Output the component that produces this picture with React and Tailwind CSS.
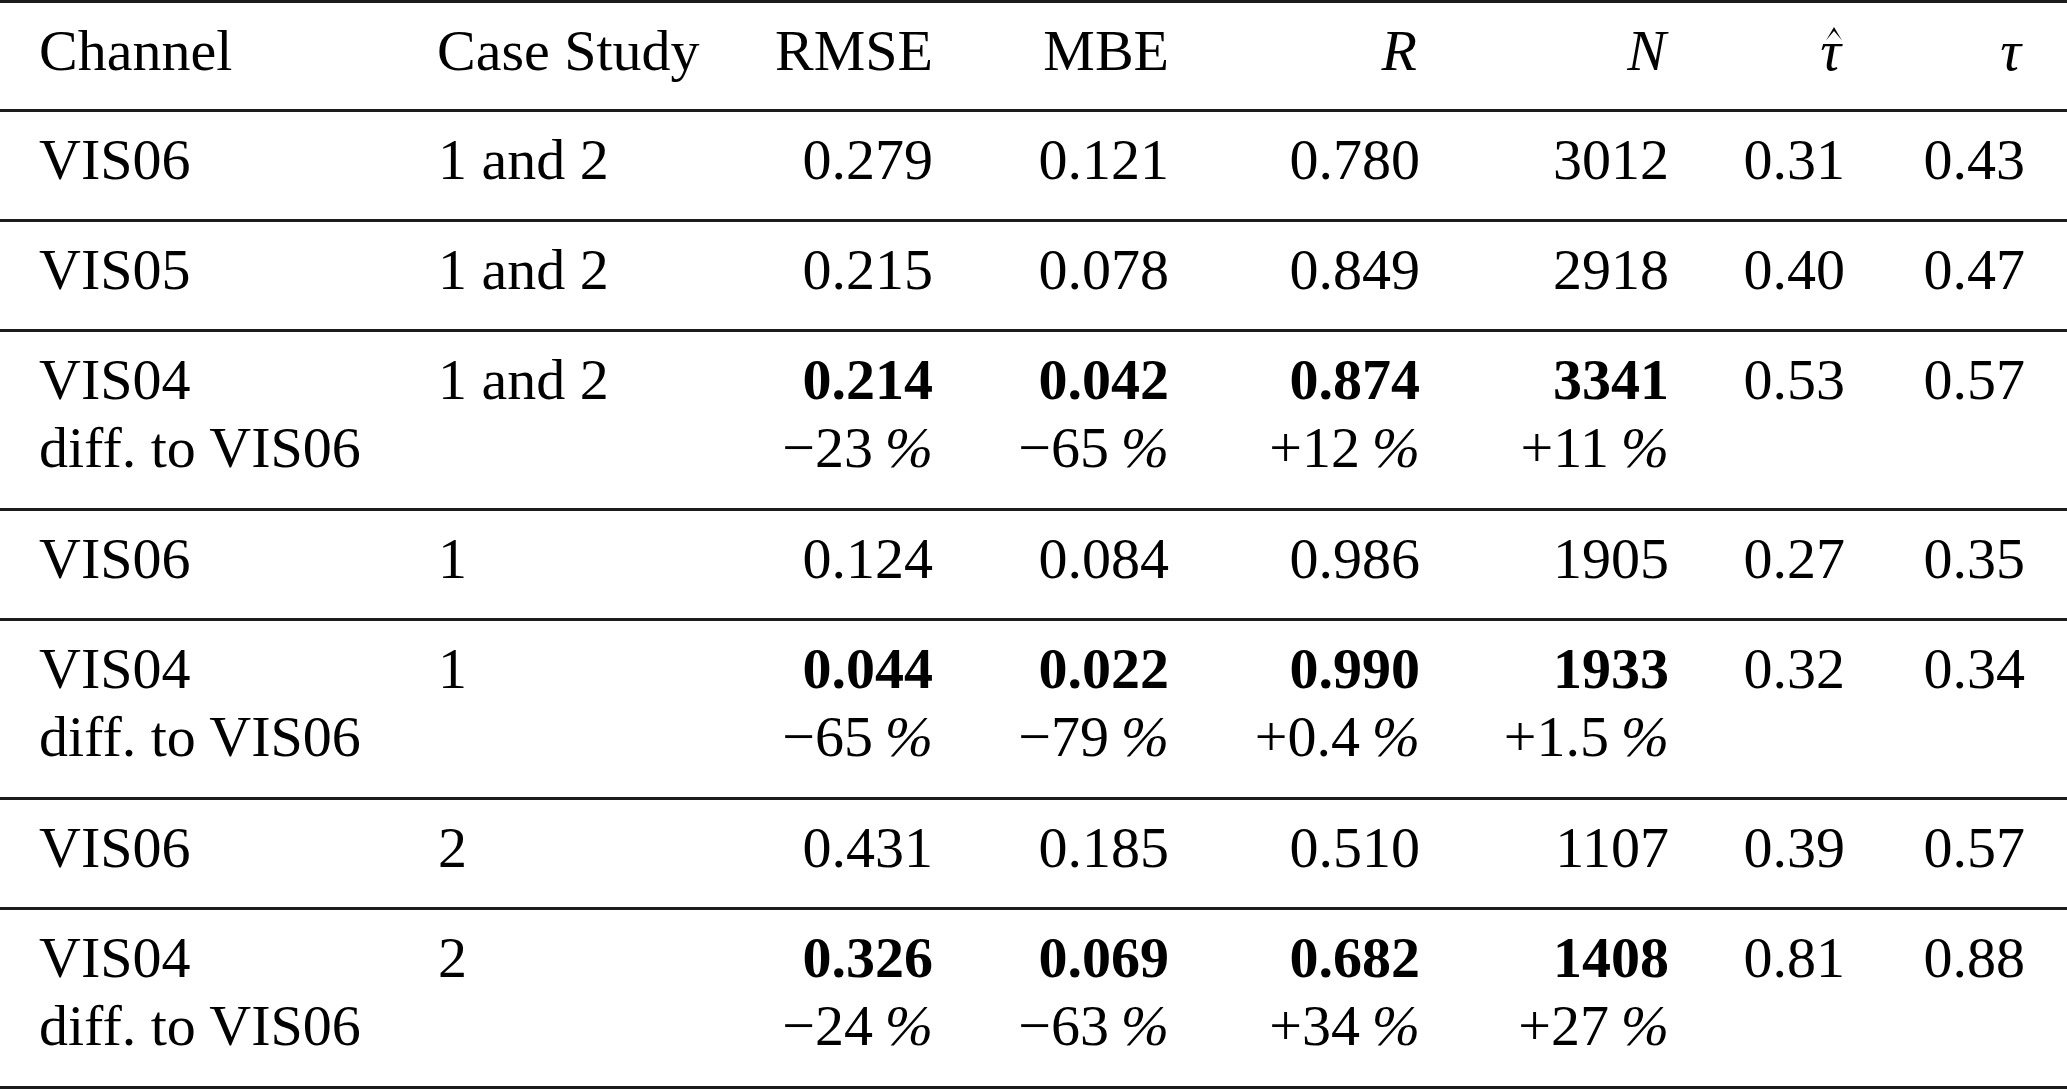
const rows = [
  { ch: ['VIS06'], cs: '1 and 2', top: ['0.279', '0.121', '0.780', '3012'], diff: null, t: ['0.31', '0.43'] },
  { ch: ['VIS05'], cs: '1 and 2', top: ['0.215', '0.078', '0.849', '2918'], diff: null, t: ['0.40', '0.47'] },
  { ch: ['VIS04', 'diff. to VIS06'], cs: '1 and 2', top: ['0.214', '0.042', '0.874', '3341'], diff: ['−23', '−65', '+12', '+11'], t: ['0.53', '0.57'] },
  { ch: ['VIS06'], cs: '1', top: ['0.124', '0.084', '0.986', '1905'], diff: null, t: ['0.27', '0.35'] },
  { ch: ['VIS04', 'diff. to VIS06'], cs: '1', top: ['0.044', '0.022', '0.990', '1933'], diff: ['−65', '−79', '+0.4', '+1.5'], t: ['0.32', '0.34'] },
  { ch: ['VIS06'], cs: '2', top: ['0.431', '0.185', '0.510', '1107'], diff: null, t: ['0.39', '0.57'] },
  { ch: ['VIS04', 'diff. to VIS06'], cs: '2', top: ['0.326', '0.069', '0.682', '1408'], diff: ['−24', '−63', '+34', '+27'], t: ['0.81', '0.88'] },
];

const grid = 'grid grid-cols-[437px_300px_196px_236px_251px_249px_176px_180px] border-t-[3px] border-[#1c1c1c]';

const Pct = ({ v }) => (
  <span>
    {v}
    {'\u2009'}
    <i>%</i>
  </span>
);

// tau with a circumflex accent drawn above it
const TauHat = () => (
  <span className="relative inline-block italic">
    τ
    <svg className="absolute left-[5px] top-[9px]" width="18" height="15" viewBox="0 0 18 15">
      <path d="M1 14.5 L9 1 L17 14.5 L9 5 Z" fill="#000" />
    </svg>
  </span>
);

export default function App() {
  return (
    <div className="w-full min-h-screen bg-white text-black font-['Liberation_Serif',serif] text-[58px] leading-[68px]">
      <div className={`${grid} pt-[14px] pb-[24px]`}>
        <div className="pl-[39px]">Channel</div>
        <div>Case Study</div>
        <div className="text-right">RMSE</div>
        <div className="text-right">MBE</div>
        <div className="text-right italic pr-[3px]">R</div>
        <div className="text-right italic pr-[3px]">N</div>
        <div className="text-right pr-[4px]">
          <TauHat />
        </div>
        <div className="text-right italic pr-[4px]">τ</div>
      </div>

      {rows.map((r, i) => {
        const bold = !!r.diff;
        return (
          <div key={i} className={`${grid} pt-[14px] ${bold ? 'pb-[26px]' : 'pb-[25px]'}`}>
            <div className="pl-[39px]">
              {r.ch.map((c) => (
                <div key={c}>{c}</div>
              ))}
            </div>
            <div className="pl-[1px]">{r.cs}</div>
            {r.top.map((v, j) => (
              <div key={j} className="text-right">
                <div className={bold ? 'font-bold' : ''}>{v}</div>
                {r.diff && <Pct v={r.diff[j]} />}
              </div>
            ))}
            <div className="text-right">{r.t[0]}</div>
            <div className="text-right">{r.t[1]}</div>
          </div>
        );
      })}
      <div className="border-t-[3px] border-[#1c1c1c]" />
    </div>
  );
}
